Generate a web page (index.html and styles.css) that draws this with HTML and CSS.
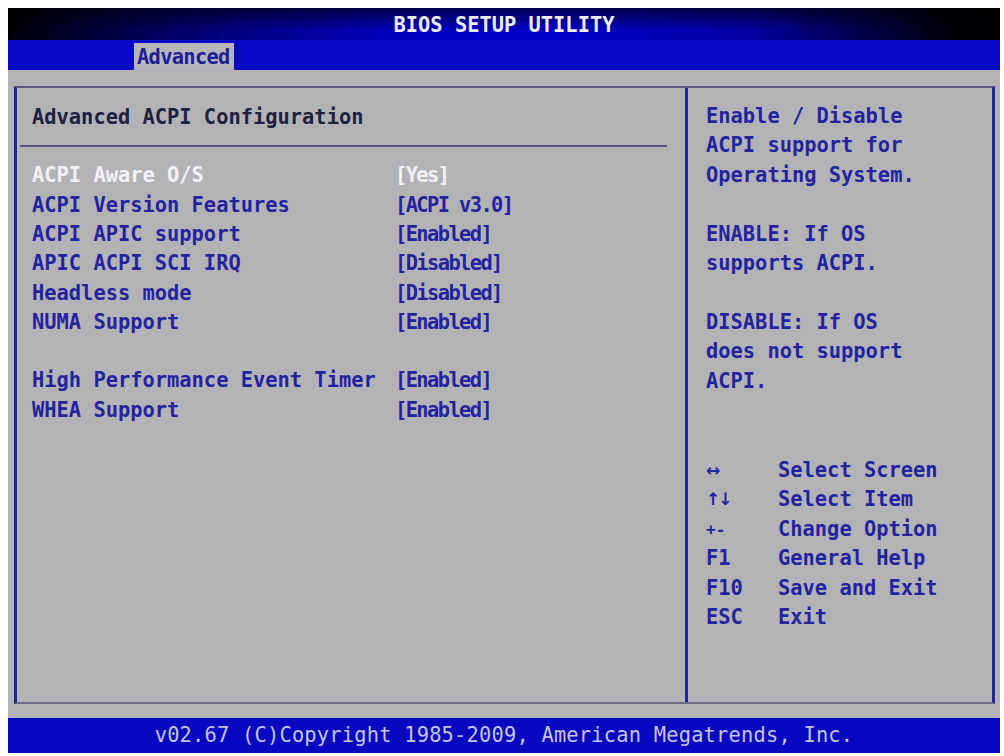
FILE: index.html
```html
<!DOCTYPE html>
<html lang="en">
<head>
  <meta charset="UTF-8">
  <title>BIOS Setup Utility</title>
  <link rel="stylesheet" href="styles.css">
</head>
<body>

<div class="screen">
  <div class="title">BIOS SETUP UTILITY</div>
  <div class="tabs">
    <span class="tab">Advanced</span>
  </div>

  <div class="main">
    <div class="frame">
      <div class="left">
        <div class="heading">Advanced ACPI Configuration</div>
        <div class="rule"></div>
        <div class="items">
          <div class="item selected"><span class="label">ACPI Aware O/S</span><span class="value">[Yes]</span></div>
          <div class="item"><span class="label">ACPI Version Features</span><span class="value">[ACPI v3.0]</span></div>
          <div class="item"><span class="label">ACPI APIC support</span><span class="value">[Enabled]</span></div>
          <div class="item"><span class="label">APIC ACPI SCI IRQ</span><span class="value">[Disabled]</span></div>
          <div class="item"><span class="label">Headless mode</span><span class="value">[Disabled]</span></div>
          <div class="item"><span class="label">NUMA Support</span><span class="value">[Enabled]</span></div>
          <div class="item blank"></div>
          <div class="item"><span class="label">High Performance Event Timer</span><span class="value">[Enabled]</span></div>
          <div class="item"><span class="label">WHEA Support</span><span class="value">[Enabled]</span></div>
        </div>
      </div>

      <div class="right">
        <div class="help">
          <p>Enable / Disable<br>ACPI support for<br>Operating System.</p>
          <p>ENABLE: If OS<br>supports ACPI.</p>
          <p>DISABLE: If OS<br>does not support<br>ACPI.</p>
        </div>
        <div class="keys">
          <div class="key"><span class="k arrow">&#8596;</span><span class="d">Select Screen</span></div>
          <div class="key"><span class="k arrow">&#8593;&#8595;</span><span class="d">Select Item</span></div>
          <div class="key"><span class="k small">+-</span><span class="d">Change Option</span></div>
          <div class="key"><span class="k">F1</span><span class="d">General Help</span></div>
          <div class="key"><span class="k">F10</span><span class="d">Save and Exit</span></div>
          <div class="key"><span class="k">ESC</span><span class="d">Exit</span></div>
        </div>
      </div>
    </div>
  </div>

  <div class="footer">v02.67 (C)Copyright 1985-2009, American Megatrends, Inc.</div>
</div>

</body>
</html>
```

FILE: styles.css
```css
body {
  margin: 0;
  padding: 0;
  background-color: #ffffff;
  font-family: "DejaVu Sans Mono", "Liberation Mono", monospace;
  font-weight: bold;
  font-size: 20.4px;
}
.screen {
  width: 992px;
  height: 745px;
  margin: 8px 4px 3px 8px;
  display: flex;
  flex-direction: column;
}
.title {
  height: 32px;
  line-height: 34px;
  text-align: center;
  color: #ececf4;
  background-image:
    linear-gradient(to bottom, rgba(0, 0, 0, 0.6), rgba(0, 0, 0, 0) 70%),
    linear-gradient(to right, #000006 0%, #000070 18%, #0000c0 40%, #0000cc 55%, #0000a0 75%, #000010 94%, #000000 100%);
}
.tabs {
  height: 30px;
  background-color: #0a0ac6;
  display: flex;
  align-items: flex-end;
}
.tab {
  margin-left: 126px;
  height: 27px;
  line-height: 29px;
  padding: 0 4px 0 3px;
  background-color: #b6b6ba;
  color: #1e1e96;
  letter-spacing: -0.7px;
}
.main {
  flex: 1;
  background-color: #b3b3b6;
  padding: 16px 5px 14px 6px;
  display: flex;
}
.frame {
  flex: 1;
  display: flex;
  border-left: 3px solid #23239a;
  border-right: 3px solid #23239a;
  border-top: 2px solid #5a5a7c;
  border-bottom: 2px solid #6c6c86;
  color: #2323a0;
  line-height: 29.4px;
}
.left {
  width: 668px;
  padding-top: 15px;
}
.heading {
  padding-left: 15px;
  color: #202040;
}
.rule {
  height: 2px;
  margin: 13px 18px 0 3px;
  background-color: #56567a;
}
.items {
  margin-top: 14px;
}
.item {
  display: flex;
  height: 29.3px;
  padding-left: 15px;
}
.label {
  width: 363px;
}
.value {
  letter-spacing: -1.6px;
}
.selected {
  color: #f2f2f6;
}
.right {
  flex: 1;
  border-left: 3px solid #23239a;
  padding: 14px 10px 0 18px;
}
.help p {
  margin: 0 0 29.4px 0;
}
.help p:last-child {
  margin-bottom: 0;
}
.keys {
  margin-top: 60px;
}
.key {
  display: flex;
}
.k {
  width: 72px;
}
.arrow {
  font-family: "DejaVu Sans", sans-serif;
  font-size: 17px;
  letter-spacing: -2px;
}
.small {
  font-size: 16px;
}
.footer {
  height: 35px;
  line-height: 35px;
  background-color: #0808c0;
  color: #c4c4e4;
  font-weight: normal;
  text-align: center;
  letter-spacing: 0.2px;
}
```
